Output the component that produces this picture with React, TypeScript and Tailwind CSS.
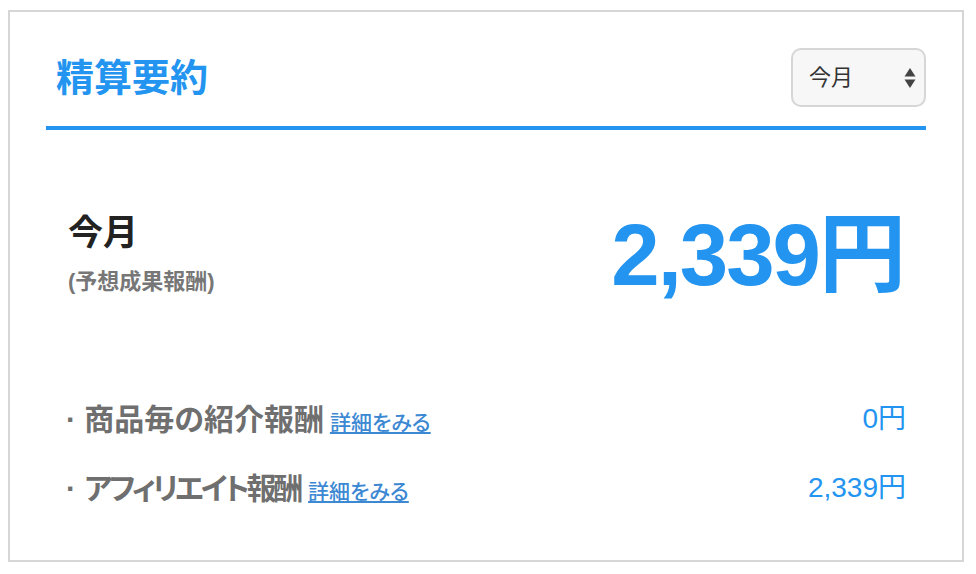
export default function App() {
  return (
    <div className="w-[976px] h-[574px] bg-white pt-[10px] pl-[8px] font-['Liberation_Sans','Noto_Sans_CJK_JP',sans-serif] [font-feature-settings:'palt']">
      <div className="w-[956px] h-[552px] border-2 border-[#d6d6d6] px-[36px] pt-[36px]">
        {/* Header */}
        <header className="flex items-center justify-between pb-[19px] border-b-4 border-[#2394ef]">
          <h1 className="pl-[10px] text-[38px] font-bold leading-none text-[#2394ef]">精算要約</h1>
          <div className="flex h-[59px] w-[135px] items-center justify-between rounded-[10px] border-2 border-[#d6d6d6] bg-[#f7f7f7] pl-[16px] pr-[8px]">
            <span className="text-[22px] text-[#333]">今月</span>
            <svg width="12" height="22" viewBox="0 0 12 22" className="text-[#444]">
              <path d="M6 1 L11.5 9.5 H0.5 Z" fill="currentColor" />
              <path d="M6 21 L11.5 12.5 H0.5 Z" fill="currentColor" />
            </svg>
          </div>
        </header>

        {/* Summary */}
        <section className="mt-[81px] flex items-center justify-between px-[22px]">
          <div>
            <p className="text-[35px] font-bold leading-[40px] text-[#222]">今月</p>
            <p className="mt-[15px] text-[22px] font-bold leading-[28px] text-[#777]">(予想成果報酬)</p>
          </div>
          <p className="text-[87px] font-bold leading-none tracking-[-2px] text-[#2394ef]">2,339円</p>
        </section>

        {/* Breakdown */}
        <div className="mt-[101px] flex h-[40px] items-center justify-between px-[20px]">
          <p className="text-[30px] font-bold text-[#6f6f6f]">
            · 商品毎の紹介報酬
            <a href="#" className="ml-[6px] text-[21px] font-medium text-[#3c88d3] underline underline-offset-2">詳細をみる</a>
          </p>
          <span className="text-[28px] text-[#2394ef]">0円</span>
        </div>
        <div className="mt-[29px] flex h-[40px] items-center justify-between px-[20px]">
          <p className="text-[30px] font-bold text-[#6f6f6f]">
            · <span className="tracking-[-3.2px]">アフィリエイト報酬</span>
            <a href="#" className="ml-[8px] text-[21px] font-medium text-[#3c88d3] underline underline-offset-2">詳細をみる</a>
          </p>
          <span className="text-[28px] text-[#2394ef]">2,339円</span>
        </div>
      </div>
    </div>
  );
}
